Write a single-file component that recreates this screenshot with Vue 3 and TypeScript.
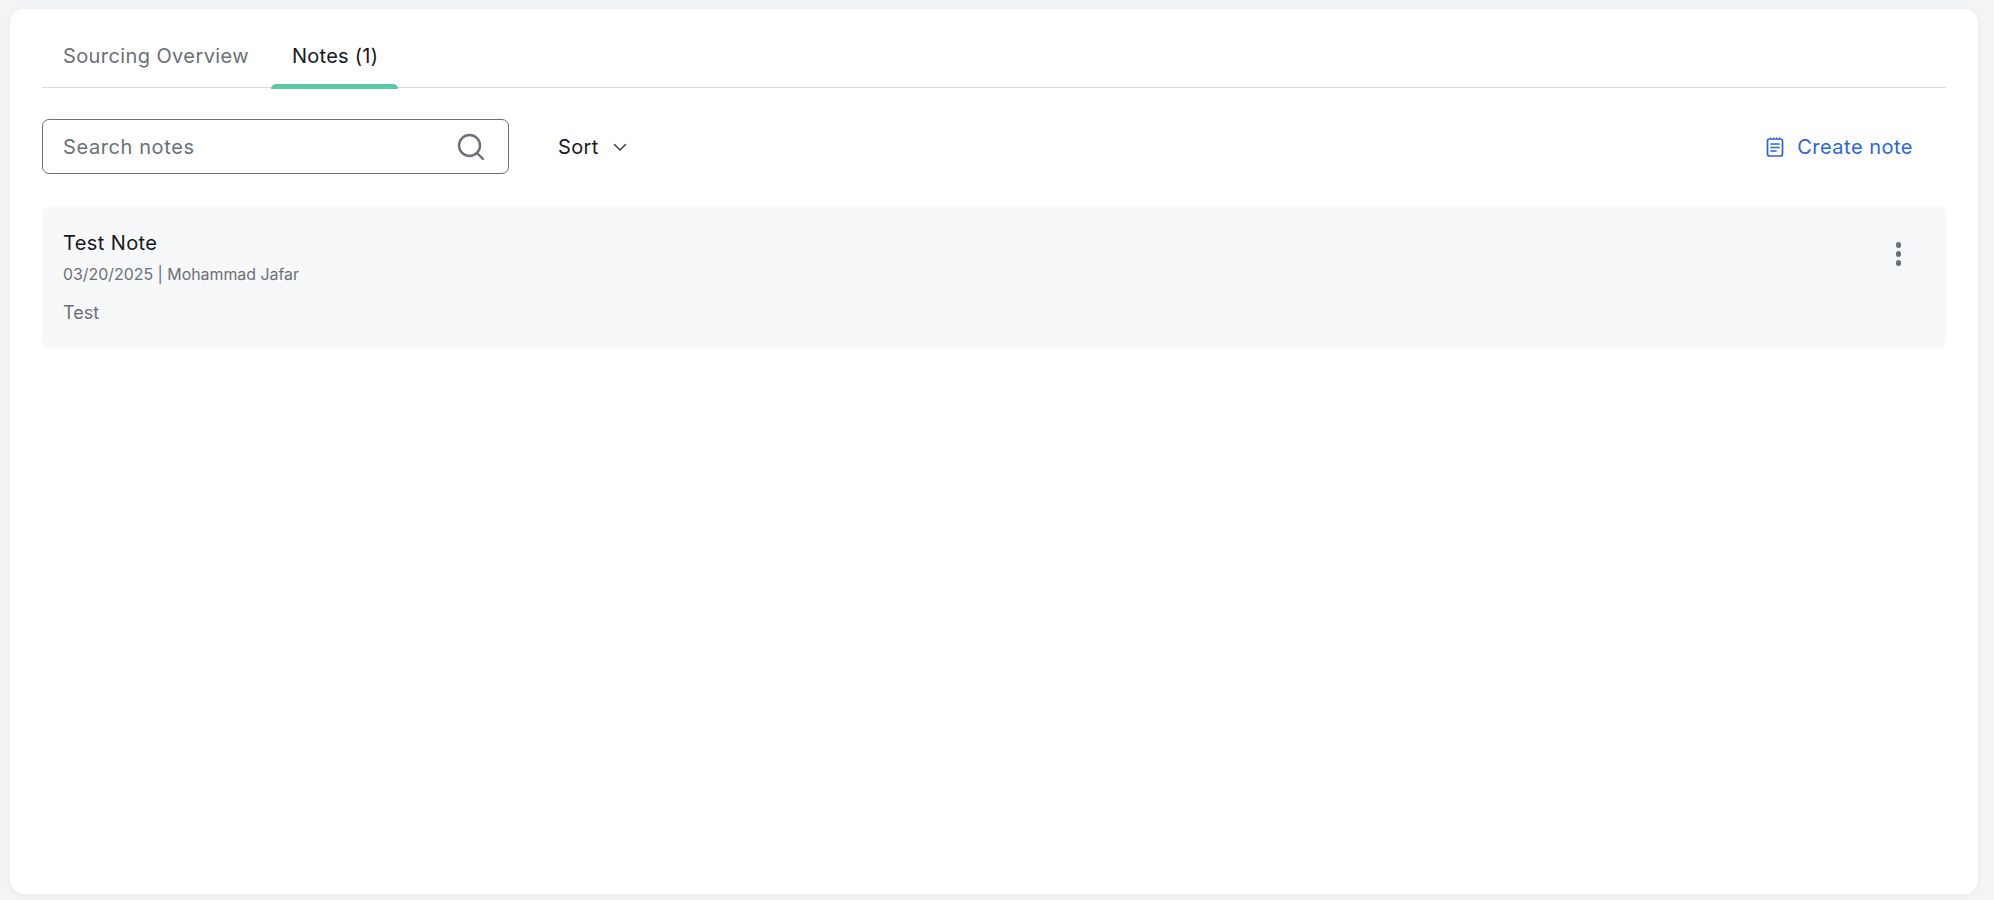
<script setup lang="ts">
const tabs = [
  { label: 'Sourcing Overview', active: false },
  { label: 'Notes (1)', active: true },
]
</script>

<template>
  <main class="page">
    <section class="card">
      <nav class="tabs">
        <div v-for="t in tabs" :key="t.label" class="tab" :class="{ active: t.active }">{{ t.label }}</div>
      </nav>
      <div class="toolbar">
        <label class="search">
          <span class="placeholder">Search notes</span>
          <svg class="search-icon" width="28" height="28" viewBox="0 0 28 28" fill="none" stroke="#6a7078" stroke-width="2.4" stroke-linecap="round">
            <circle cx="12.5" cy="12.5" r="10.5" />
            <path d="M20.5 20.5 L26 26" />
          </svg>
        </label>
        <div class="sort">
          <span>Sort</span>
          <svg width="16" height="16" viewBox="0 0 16 16" fill="none" stroke="#3a3f46" stroke-width="1.5" stroke-linecap="round" stroke-linejoin="round">
            <path d="M2.5 5.5 L8 11 L13.5 5.5" />
          </svg>
        </div>
        <div class="create">
          <svg width="18" height="20" viewBox="0 0 18 20" fill="none" stroke="#2a66dc" stroke-width="1.7" stroke-linecap="round">
            <rect x="1.5" y="2" width="15" height="17" rx="2" />
            <path d="M5 7 H13 M5 10.5 H13 M5 14 H10" />
            <path d="M4.5 0.8 V2 M7.5 0.8 V2 M10.5 0.8 V2 M13.5 0.8 V2" stroke-width="1" />
          </svg>
          <span>Create note</span>
        </div>
      </div>
      <article class="note">
        <div class="note-body">
          <h3 class="note-title">Test Note</h3>
          <p class="note-meta">03/20/2025 | Mohammad Jafar</p>
          <p class="note-text">Test</p>
        </div>
        <div class="dots"><i></i><i></i><i></i></div>
      </article>
    </section>
  </main>
</template>

<style>
html, body { margin: 0; background: #f3f4f6; }
</style>

<style scoped>
.page {
  box-sizing: border-box;
  height: 900px;
  padding: 9px 16px 6px 10px;
  background: #f3f4f6;
  font-family: Inter, "Liberation Sans", sans-serif;
  overflow: hidden;
}
.card {
  box-sizing: border-box;
  height: 885px;
  padding: 0 32px;
  background: #fff;
  border-radius: 14px;
  box-shadow: 0 1px 6px rgba(0, 0, 0, 0.05);
}
.tabs {
  display: flex;
  gap: 1px;
  box-sizing: border-box;
  height: 79px;
  border-bottom: 1px solid #d9dbde;
}
.tab {
  box-sizing: border-box;
  height: 79px;
  padding: 35px 21px 0;
  font-size: 20px;
  letter-spacing: 0.4px;
  line-height: 24px;
  color: #6a7078;
}
.tab.active {
  color: #16181d;
  position: relative;
  letter-spacing: 0.25px;
  padding-right: 20px;
}
.tab.active::after {
  content: "";
  position: absolute;
  left: 0;
  right: 0;
  bottom: -1px;
  height: 5px;
  background: #5ac8a0;
  border-radius: 5px 5px 0 0;
}
.toolbar {
  display: flex;
  align-items: center;
  margin-top: 31px;
}
.search {
  box-sizing: border-box;
  width: 467px;
  height: 55px;
  border: 1px solid #6a7078;
  border-radius: 7px;
  padding: 0 23px 0 20px;
  display: flex;
  align-items: center;
  justify-content: space-between;
}
.placeholder {
  font-size: 20px;
  letter-spacing: 0.6px;
  color: #6a7078;
}
.search-icon { display: block; }
.sort {
  display: flex;
  align-items: center;
  gap: 13px;
  margin-left: 49px;
  font-size: 20px;
  letter-spacing: 0.4px;
  color: #16181d;
}
.create {
  margin-left: auto;
  margin-right: 33px;
  display: flex;
  align-items: center;
  gap: 13px;
  color: #2a66dc;
  font-size: 20px;
  letter-spacing: 0.5px;
}
.note {
  margin-top: 32px;
  box-sizing: border-box;
  height: 142px;
  background: #f7f8fa;
  border-radius: 8px;
  padding: 25px 21px;
  display: flex;
  justify-content: space-between;
}
.note-title {
  margin: 0;
  font-size: 20px;
  letter-spacing: 0.4px;
  font-weight: 400;
  line-height: 24px;
  color: #16181d;
}
.note-meta {
  margin: 10px 0 0;
  font-size: 15.9px;
  line-height: 20px;
  color: #6a7078;
}
.note-text {
  margin: 18px 0 0;
  font-size: 18px;
  line-height: 20px;
  color: #6a7078;
}
.dots {
  display: flex;
  flex-direction: column;
  gap: 3.5px;
  margin: 11px 24px 0 0;
}
.dots i {
  display: block;
  width: 5.5px;
  height: 5.5px;
  border-radius: 50%;
  background: #6a7078;
}
</style>
